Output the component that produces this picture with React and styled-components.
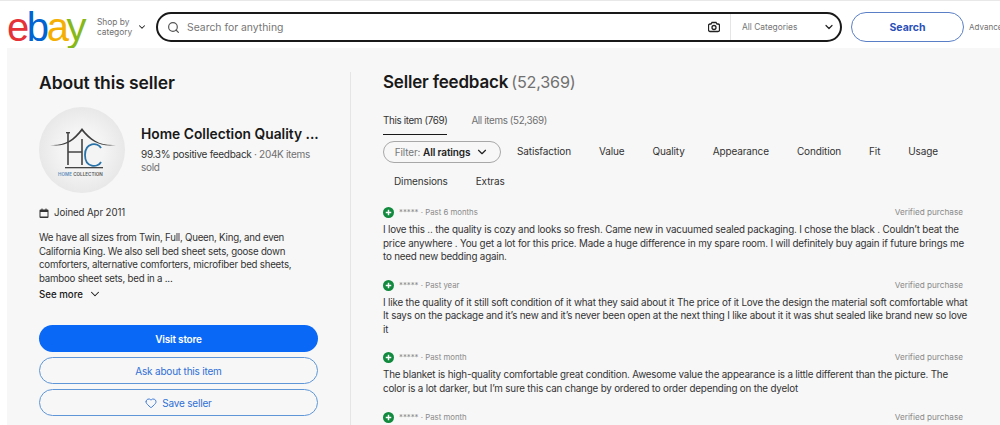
import React from 'react'
import styled, { createGlobalStyle } from 'styled-components'
import { ChevronDown, Search, Heart } from 'lucide-react'

const Global = createGlobalStyle`
  html, body { margin:0; padding:0; background:#fff; height:100%; overflow:hidden; }
  body { font-family:Inter,"Liberation Sans",sans-serif; color:#191919; }
  * { box-sizing:border-box; }
`

const Page = styled.div`
  width:1000px;
  height:425px;
  overflow:hidden;
`
const Header = styled.header`
  height:48px;
  border-top:1px solid #e8e8e8;
  padding-top:5px;
  display:flex;
  align-items:center;
  white-space:nowrap;
  overflow:hidden;
`
const Logo = styled.div`
  width:96px;
  height:42px;
  padding-left:7px;
  font-family:"Liberation Sans",sans-serif;
  font-size:40px;
  line-height:42px;
  letter-spacing:-2.4px;
  flex:none;
`
const LogoLetter = styled.span`
  color:${({color})=>color};
`
const ShopBy = styled.div`
  width:60px;
  flex:none;
  padding-left:1px;
  display:flex;
  align-items:center;
  gap:5px;
  font-size:8.4px;
  line-height:10px;
  color:#707070;
  svg { color:#222; margin-top:-1px; }
`
const SearchBar = styled.div`
  width:686px;
  height:30px;
  flex:none;
  border:2px solid #191919;
  border-radius:15px;
  display:flex;
  align-items:center;
  padding-left:9px;
`
const SearchText = styled.div`
  flex:1;
  margin-left:7px;
  font-size:10.4px;
  color:#767676;
`
const Camera = styled.svg`
  width:12px;
  height:12px;
  margin-right:10px;
`
const CategorySelect = styled.div`
  width:110px;
  height:100%;
  border-left:1px solid #e5e5e5;
  display:flex;
  align-items:center;
  justify-content:space-between;
  padding:0 5px 0 11px;
  font-size:8.4px;
  color:#767676;
  svg { color:#222; }
`
const SearchButton = styled.div`
  margin-left:9px;
  width:113px;
  height:30px;
  flex:none;
  border:1px solid #5b7fc7;
  border-radius:15px;
  display:flex;
  align-items:center;
  justify-content:center;
  color:#2a50b8;
  font-size:10.5px;
  font-weight:700;
`
const Advanced = styled.div`
  margin-left:5px;
  font-size:8px;
  color:#707070;
`
const Main = styled.main`
  margin-left:7px;
  height:377px;
  background:#f7f7f7;
  display:flex;
`
const Sidebar = styled.aside`
  width:343px;
  flex:none;
  height:100%;
  padding:25px 32px 0;
  display:flex;
  flex-direction:column;
`
const Title = styled.h2`
  margin:0;
  font-size:17.5px;
  line-height:20px;
  font-weight:600;
  letter-spacing:-.1px;
`
const SellerRow = styled.div`
  display:flex;
  align-items:center;
  gap:16px;
  margin-top:14px;
`
const Avatar = styled.div`
  width:86px;
  height:86px;
  flex:none;
  border-radius:50%;
  background:radial-gradient(circle,#f4f4f4 35%,#dedede 100%);
`
const SellerName = styled.div`
  font-size:13.8px;
  line-height:18px;
  font-weight:600;
  white-space:nowrap;
  margin-top:-1px;
`
const SellerStats = styled.div`
  margin-top:5px;
  font-size:10px;
  line-height:13.5px;
  letter-spacing:-.3px;
  color:#707070;
  white-space:nowrap;
  b { font-weight:400; color:#333; }
`
const Joined = styled.div`
  margin-top:14px;
  display:flex;
  align-items:center;
  gap:5px;
  font-size:9.7px;
  line-height:12px;
  letter-spacing:-.1px;
  color:#333;
`
const About = styled.p`
  margin:12px 0 0;
  font-size:9.7px;
  line-height:13.6px;
  letter-spacing:-.22px;
  color:#333;
  white-space:nowrap;
`
const SeeMore = styled.div`
  margin-top:2px;
  display:flex;
  align-items:center;
  gap:5px;
  font-size:9.7px;
  line-height:13px;
  font-weight:500;
`
const Actions = styled.div`
  margin-top:24px;
  display:flex;
  flex-direction:column;
  gap:5px;
`
const Action = styled.div`
  height:27px;
  border-radius:14px;
  display:flex;
  align-items:center;
  justify-content:center;
  gap:5px;
  font-size:10px;
  letter-spacing:-.2px;
  font-weight:${({primary})=>primary?600:400};
  color:${({primary})=>primary?'#fff':'#2f6fd6'};
  background:${({primary})=>primary?'#0968f6':'transparent'};
  border:${({primary})=>primary?'none':'1px solid #5f96d8'};
`
const Content = styled.section`
  flex:1;
  min-width:0;
  height:100%;
  margin-top:24px;
  padding:0 37px 0 32px;
  border-left:1px solid #e5e5e5;
  overflow:hidden;
`
const FeedbackTitle = styled.h2`
  margin:0;
  font-size:17px;
  line-height:20px;
  font-weight:600;
  letter-spacing:-.2px;
  span { font-weight:400; font-size:16.2px; color:#707070; margin-left:-1px; }
`
const Tabs = styled.div`
  margin-top:22px;
  display:flex;
  gap:24px;
  font-size:9.8px;
  line-height:14px;
  letter-spacing:-.35px;
`
const Tab = styled.div`
  height:21px;
  color:${({active})=>active?'#333':'#707070'};
  ${({active})=>active && 'border-bottom:1px solid #191919;'}
`
const Filters = styled.div`
  margin-top:6px;
  display:flex;
  flex-wrap:wrap;
  align-items:center;
  column-gap:28px;
  font-size:10px;
  letter-spacing:-.13px;
  color:#333;
`
const FilterPill = styled.div`
  width:118px;
  height:22px;
  margin-right:-12px;
  border:1px solid #a8a8a8;
  border-radius:11px;
  display:flex;
  align-items:center;
  justify-content:center;
  gap:5px;
  color:#767676;
  b { font-weight:600; color:#222; }
  span { display:block; }
`
const Chip = styled.div`
  height:${({row2})=>row2?30:22}px;
  line-height:${({row2})=>row2?'36px':'20px'};
  ${({first})=>first && 'margin-left:11px;'}
`
const Spacer = styled.div`
  flex-basis:100%;
  height:0;
`
const Reviews = styled.div`
  margin-top:14px;
  display:flex;
  flex-direction:column;
  gap:16.2px;
`
const ReviewMeta = styled.div`
  display:flex;
  align-items:center;
  font-size:7.8px;
  line-height:11px;
  color:#8a8a8a;
`
const Plus = styled.svg`
  width:11px;
  height:11px;
  margin-right:5px;
  flex:none;
`
const Verified = styled.span`
  margin-left:auto;
  font-size:8.2px;
`
const ReviewText = styled.p`
  margin:5px 0 0;
  font-size:9.8px;
  line-height:13.5px;
  letter-spacing:-.18px;
  color:#333;
  white-space:nowrap;
`

const reviews = [
  { when:'Past 6 months', lines:[
    'I love this .. the quality is cozy and looks so fresh. Came new in vacuumed sealed packaging. I chose the black . Couldn’t beat the',
    'price anywhere . You get a lot for this price. Made a huge difference in my spare room. I will definitely buy again if future brings me',
    'to need new bedding again.' ] },
  { when:'Past year', lines:[
    'I like the quality of it still soft condition of it what they said about it The price of it Love the design the material soft comfortable what',
    'It says on the package and it’s new and it’s never been open at the next thing I like about it it was shut sealed like brand new so love',
    'it' ] },
  { when:'Past month', lines:[
    'The blanket is high-quality comfortable great condition. Awesome value the appearance is a little different than the picture. The',
    'color is a lot darker, but I’m sure this can change by ordered to order depending on the dyelot' ] },
  { when:'Past month', lines:[] },
]

const Lines = ({lines}) => lines.map((l,i)=><React.Fragment key={i}>{i>0 && <br/>}{l}</React.Fragment>)

const HcLogo = () => (
  <svg width="86" height="86" viewBox="0 0 86 86">
    <path d="M11 38c14 1 22-4 32-17c9 12 18 18 34 17c-15 2-25-3-34-14c-9 11-17 16-32 14z" fill="#3f3f3f"/>
    <path d="M29 26v32M43 32v26M29 45h14" stroke="#444" strokeWidth="1.6" fill="none"/>
    <rect x="27" y="25" width="4" height="1.4" fill="#444"/>
    <path d="M62 41c-3-6-16-6-16 7c0 13 13 13 16 7" stroke="#2a73a8" strokeWidth="1.8" fill="none"/>
    <rect x="26" y="60" width="38" height="1.3" fill="#444"/>
    <text x="19" y="69" fontSize="4.6" fontWeight="600" fontFamily="Inter,sans-serif"><tspan fill="#5a8fbd">HOME </tspan><tspan fill="#555">COLLECTION</tspan></text>
  </svg>
)

export default function App(){
  return (
    <Page>
      <Global/>
      <Header>
        <Logo>
          <LogoLetter color="#e53238">e</LogoLetter>
          <LogoLetter color="#0064d2">b</LogoLetter>
          <LogoLetter color="#f5af02">a</LogoLetter>
          <LogoLetter color="#86b817">y</LogoLetter>
        </Logo>
        <ShopBy>
          <span>Shop by<br/>category</span>
          <ChevronDown size={10} strokeWidth={2.5}/>
        </ShopBy>
        <SearchBar>
          <Search size={13} strokeWidth={2.2} color="#555"/>
          <SearchText>Search for anything</SearchText>
          <Camera viewBox="0 0 24 24">
            <path d="M8 3h8l2 3h2a3 3 0 0 1 3 3v9a3 3 0 0 1-3 3H4a3 3 0 0 1-3-3V9a3 3 0 0 1 3-3h2z" fill="none" stroke="#222" strokeWidth="2.6"/>
            <circle cx="12" cy="13" r="4" fill="none" stroke="#222" strokeWidth="2.6"/>
          </Camera>
          <CategorySelect>
            All Categories
            <ChevronDown size={12} strokeWidth={2.4}/>
          </CategorySelect>
        </SearchBar>
        <SearchButton>Search</SearchButton>
        <Advanced>Advanced</Advanced>
      </Header>
      <Main>
        <Sidebar>
          <Title>About this seller</Title>
          <SellerRow>
            <Avatar><HcLogo/></Avatar>
            <div>
              <SellerName>Home Collection Quality ...</SellerName>
              <SellerStats><b>99.3% positive feedback</b> · 204K items<br/>sold</SellerStats>
            </div>
          </SellerRow>
          <Joined>
            <svg width="10" height="10" viewBox="0 0 10 10">
              <path d="M1.5 1.5h1V.5h1v1h3V.5h1v1h1a1 1 0 0 1 1 1V9a1 1 0 0 1-1 1h-7a1 1 0 0 1-1-1V2.5a1 1 0 0 1 1-1zM1.5 4v4.5h7V4z" fill="#333" fillRule="evenodd"/>
            </svg>
            Joined Apr 2011
          </Joined>
          <About>
            We have all sizes from Twin, Full, Queen, King, and even<br/>
            California King. We also sell bed sheet sets, goose down<br/>
            comforters, alternative comforters, microfiber bed sheets,<br/>
            bamboo sheet sets, bed in a ...
          </About>
          <SeeMore>See more <ChevronDown size={14} strokeWidth={1.8}/></SeeMore>
          <Actions>
            <Action primary>Visit store</Action>
            <Action>Ask about this item</Action>
            <Action><Heart size={12} strokeWidth={1.8}/>Save seller</Action>
          </Actions>
        </Sidebar>
        <Content>
          <FeedbackTitle>Seller feedback <span>(52,369)</span></FeedbackTitle>
          <Tabs>
            <Tab active>This item (769)</Tab>
            <Tab>All items (52,369)</Tab>
          </Tabs>
          <Filters>
            <FilterPill><span>Filter: <b>All ratings</b></span><ChevronDown size={14} strokeWidth={2} color="#222"/></FilterPill>
            <Chip>Satisfaction</Chip>
            <Chip>Value</Chip>
            <Chip>Quality</Chip>
            <Chip>Appearance</Chip>
            <Chip>Condition</Chip>
            <Chip>Fit</Chip>
            <Chip>Usage</Chip>
            <Spacer/>
            <Chip row2 first>Dimensions</Chip>
            <Chip row2>Extras</Chip>
          </Filters>
          <Reviews>
            {reviews.map((r,i)=>(
              <div key={i}>
                <ReviewMeta>
                  <Plus viewBox="0 0 12 12">
                    <circle cx="6" cy="6" r="6" fill="#118a3e"/>
                    <path d="M6 3v6M3 6h6" stroke="#fff" strokeWidth="1.6"/>
                  </Plus>
                  ***** · {r.when}
                  <Verified>Verified purchase</Verified>
                </ReviewMeta>
                {r.lines.length>0 && <ReviewText><Lines lines={r.lines}/></ReviewText>}
              </div>
            ))}
          </Reviews>
        </Content>
      </Main>
    </Page>
  )
}
